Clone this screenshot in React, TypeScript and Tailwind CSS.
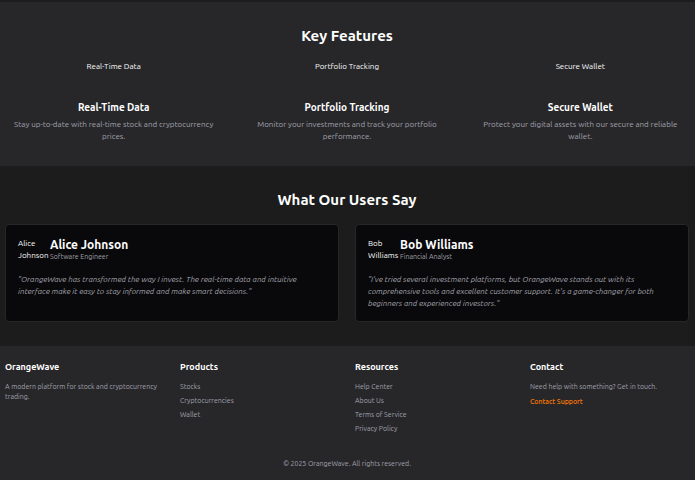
const features = [
  { title: 'Real-Time Data', text: 'Stay up-to-date with real-time stock and cryptocurrency prices.' },
  { title: 'Portfolio Tracking', text: 'Monitor your investments and track your portfolio performance.' },
  { title: 'Secure Wallet', text: 'Protect your digital assets with our secure and reliable wallet.' },
];

const testimonials = [
  {
    name: 'Alice Johnson',
    role: 'Software Engineer',
    quote:
      '"OrangeWave has transformed the way I invest. The real-time data and intuitive interface make it easy to stay informed and make smart decisions."',
  },
  {
    name: 'Bob Williams',
    role: 'Financial Analyst',
    quote:
      '"I\'ve tried several investment platforms, but OrangeWave stands out with its comprehensive tools and excellent customer support. It\'s a game-changer for both beginners and experienced investors."',
  },
];

const linkColumns = [
  { title: 'Products', links: ['Stocks', 'Cryptocurrencies', 'Wallet'] },
  { title: 'Resources', links: ['Help Center', 'About Us', 'Terms of Service', 'Privacy Policy'] },
];

function FooterHeading({ children }: { children: string }) {
  return <h3 className="mb-2 text-[9px] leading-3 font-bold text-white">{children}</h3>;
}

export default function App() {
  return (
    <div className="min-h-screen bg-[#1c1c1c] pt-0.5 font-[Ubuntu,'Noto_Sans',sans-serif] text-[8px] leading-3 text-[#fafafa]">
      <section className="bg-[#27272a] pt-6 pr-1.5 pb-[23px] pl-[5px] text-center">
        <h2 className="mb-[15px] text-[15px] leading-5 font-bold text-white">Key Features</h2>
        <div className="grid grid-cols-3 gap-4">
          {features.map((f) => (
            <div key={f.title}>
              <div className="mb-2 h-8">{f.title}</div>
              <h3 className="mb-1 text-[10px] leading-3.5 font-bold text-white">{f.title}</h3>
              <p className="text-[#a1a1aa]">{f.text}</p>
            </div>
          ))}
        </div>
      </section>

      <section className="py-6 pr-1.5 pl-[5px]">
        <h2 className="mb-3.5 text-center text-[15px] leading-5 font-bold text-white">What Our Users Say</h2>
        <div className="grid grid-cols-2 gap-4">
          {testimonials.map((t) => (
            <article key={t.name} className="rounded-sm border border-[#27272a] bg-[#09090b] px-3 pt-[13px] pb-[11px]">
              <div className="mb-3 flex items-center">
                <div className="w-8 shrink-0">{t.name}</div>
                <div>
                  <h3 className="text-[12px] leading-3 font-bold text-white">{t.name}</h3>
                  <p className="text-[7px] leading-2.5 text-[#a1a1aa]">{t.role}</p>
                </div>
              </div>
              <p className="text-[#a1a1aa] italic">{t.quote}</p>
            </article>
          ))}
        </div>
      </section>

      <footer className="bg-[#27272a] pt-[15px] pr-1.5 pb-3 pl-[5px] text-[7px] leading-2.5 text-[#a1a1aa]">
        <div className="grid grid-cols-4 gap-4">
          <div>
            <FooterHeading>OrangeWave</FooterHeading>
            <p>A modern platform for stock and cryptocurrency trading.</p>
          </div>
          {linkColumns.map((c) => (
            <div key={c.title}>
              <FooterHeading>{c.title}</FooterHeading>
              <ul className="flex flex-col gap-1">
                {c.links.map((l) => (
                  <li key={l}>
                    <a href="#" className="block">{l}</a>
                  </li>
                ))}
              </ul>
            </div>
          ))}
          <div>
            <FooterHeading>Contact</FooterHeading>
            <p className="mb-[5px]">Need help with something? Get in touch.</p>
            <a href="#" className="block font-medium text-[#ff7a00]">Contact Support</a>
          </div>
        </div>
        <p className="mt-[25px] text-center">© 2025 OrangeWave. All rights reserved.</p>
      </footer>
    </div>
  );
}
